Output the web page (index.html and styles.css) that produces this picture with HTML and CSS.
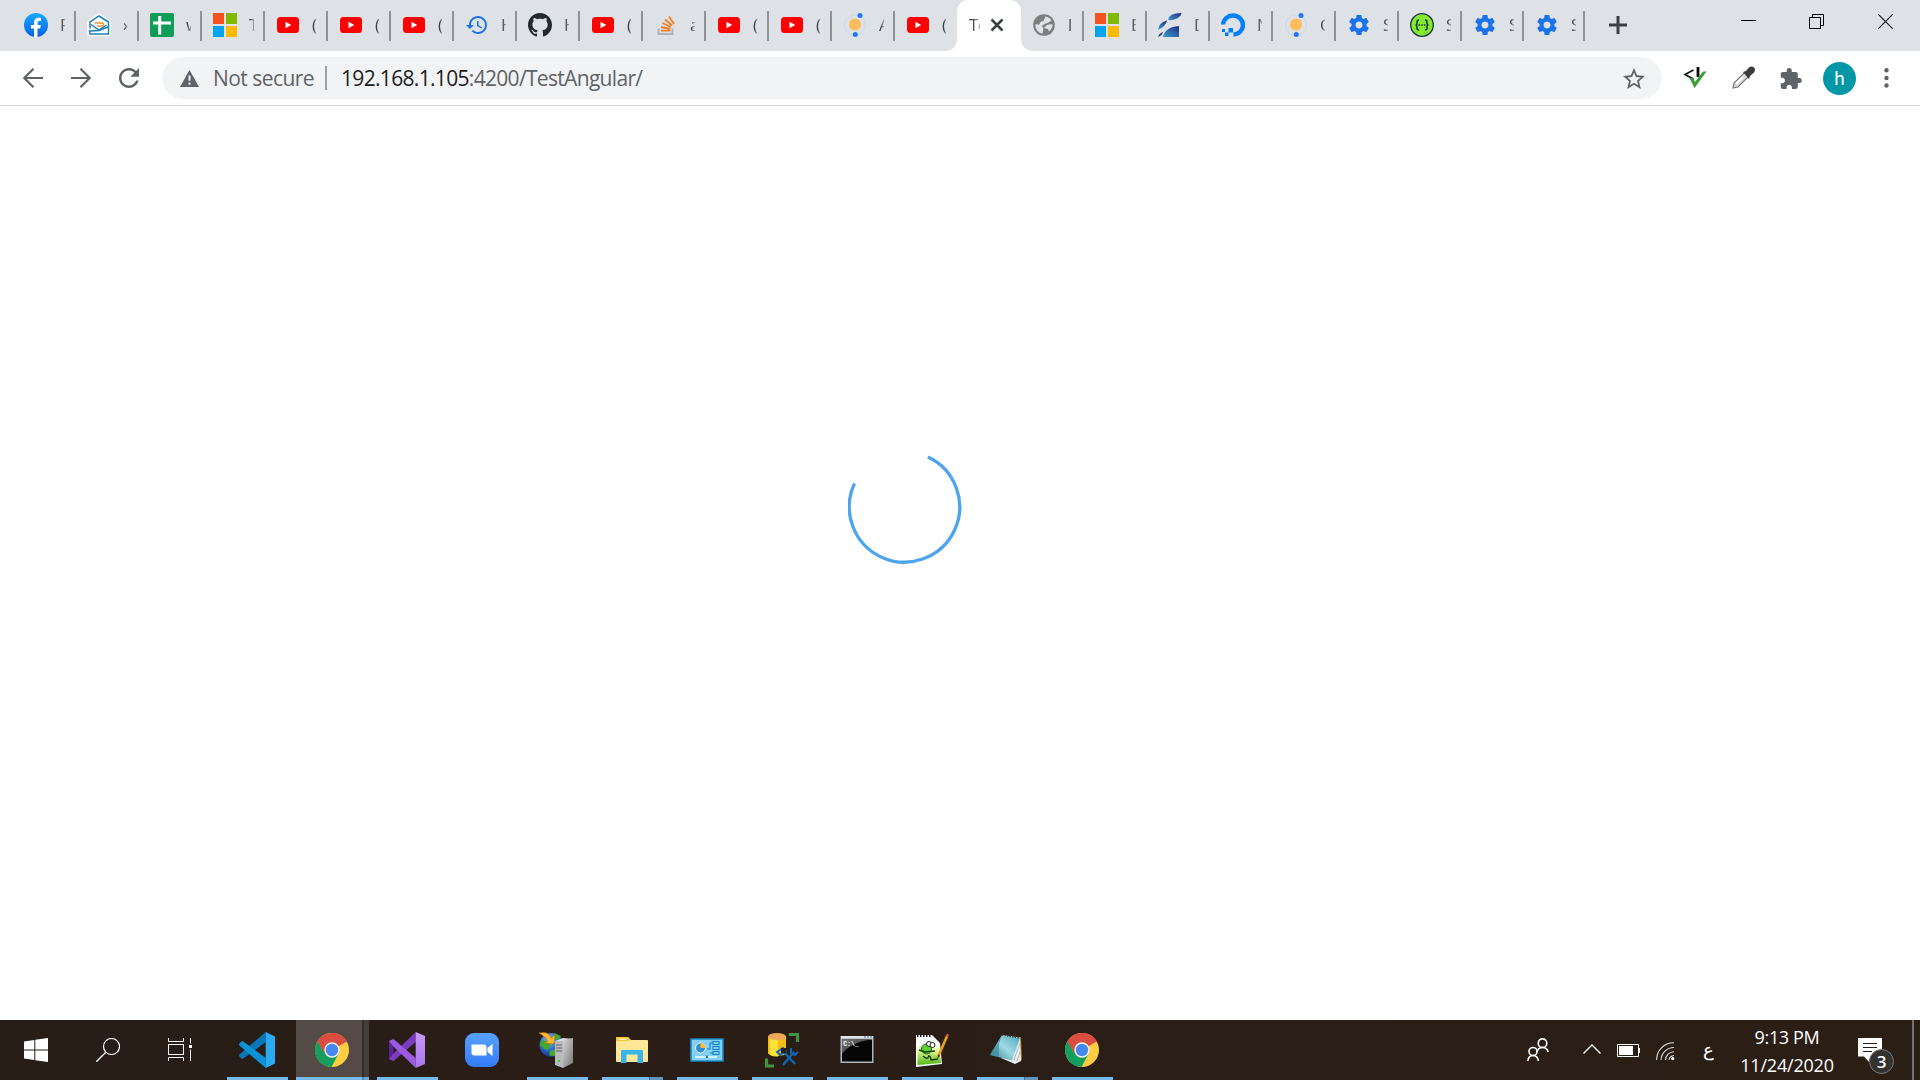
FILE: index.html
```html
<!DOCTYPE html>
<html lang="en">
<head>
<meta charset="utf-8">
<title>TestAngular</title>
<link rel="stylesheet" href="styles.css">
</head>
<body>
<svg class="defs" width="0" height="0">
  <defs>
    <linearGradient id="fbg" x1="0" y1="0" x2="0" y2="1"><stop offset="0" stop-color="#19aaff"/><stop offset="1" stop-color="#0560e8"/></linearGradient>
    <linearGradient id="leaf" x1="1" y1="0" x2="0" y2="1"><stop offset="0" stop-color="#1d2c85"/><stop offset="1" stop-color="#3e9ccc"/></linearGradient>
    <linearGradient id="zoomg" x1="0" y1="0" x2="0" y2="1"><stop offset="0" stop-color="#57a2ff"/><stop offset="1" stop-color="#367bf8"/></linearGradient>
    <linearGradient id="srv" x1="0" y1="0" x2="1" y2="1"><stop offset="0" stop-color="#d5d5d5"/><stop offset="1" stop-color="#777"/></linearGradient>
    <linearGradient id="note" x1="0" y1="1" x2="1" y2="0"><stop offset="0" stop-color="#2c7d93"/><stop offset=".5" stop-color="#9edbe6"/><stop offset="1" stop-color="#4ba4b8"/></linearGradient>
    <linearGradient id="npp" x1="0" y1="0" x2="0" y2="1"><stop offset="0" stop-color="#fff"/><stop offset=".35" stop-color="#dff58b"/><stop offset="1" stop-color="#4fb512"/></linearGradient>
    <radialGradient id="globe" cx=".4" cy=".3" r=".75"><stop offset="0" stop-color="#8fc5f5"/><stop offset=".5" stop-color="#2e6fd0"/><stop offset="1" stop-color="#152a80"/></radialGradient>
    <linearGradient id="vsr" x1="0" y1="0" x2="0" y2="1"><stop offset="0" stop-color="#c79af8"/><stop offset="1" stop-color="#a974ef"/></linearGradient>
    <linearGradient id="cmd" x1="0" y1="0" x2="1" y2="1"><stop offset="0" stop-color="#777"/><stop offset="1" stop-color="#222"/></linearGradient>
  </defs>
  <symbol id="facebook" viewBox="0 0 24 24"><circle cx="12" cy="12" r="12" fill="url(#fbg)"/><path d="M10 24v-8.400H7v-3.500h3V9.500c0-3 1.800-4.700 4.600-4.700 1.200 0 2.300.2 2.300.2v3h-1.500c-1.500 0-1.900.9-1.900 1.900v2.200h3.300l-.6 3.500h-2.700V24z" fill="#fff"/></symbol>
  <symbol id="mail" viewBox="0 0 24 24"><path d="M12 2 2 9v12.500h20V9z" fill="#fff" stroke="#fff" stroke-width="3.500" stroke-linejoin="round"/><path d="M3 15.500V9L12 3l9.500 6v12H3l-.5-3 9.500-.5 9-3.500" fill="none" stroke="#1b7fb9" stroke-width="1.500"/><path d="m4 11.500 8 5.500 7.500-5" fill="none" stroke="#1b7fb9" stroke-width="1.500"/><path d="M7.500 10h8q2 1 0 3H10" fill="none" stroke="#f39b32" stroke-width="1.600"/></symbol>
  <symbol id="sheet" viewBox="0 0 24 24"><rect width="24" height="24" rx="2" fill="#0f9d58"/><path d="M9.700 3v18.500M3 10h18" stroke="#fff" stroke-width="3"/></symbol>
  <symbol id="ms" viewBox="0 0 24 24"><path d="M0 0h11v11H0z" fill="#f4511e"/><path d="M13 0h11v11H13z" fill="#7fba00"/><path d="M0 13h11v11H0z" fill="#00a4ef"/><path d="M13 13h11v11H13z" fill="#ffb900"/></symbol>
  <symbol id="yt" viewBox="0 0 24 24"><rect x="1" y="4" width="22" height="16" rx="3.500" fill="red"/><path d="M9.500 8.800v6.400l5.800-3.200z" fill="#fff"/></symbol>
  <symbol id="history" viewBox="0 0 24 24"><path d="M13 3c-4.970 0-9 4.030-9 9H1l3.890 3.890.07.14L9 12H6c0-3.870 3.130-7 7-7s7 3.130 7 7-3.130 7-7 7c-1.930 0-3.680-.79-4.940-2.060l-1.420 1.420C8.270 19.990 10.510 21 13 21c4.970 0 9-4.030 9-9s-4.030-9-9-9zm-1 5v5l4.280 2.540.72-1.210-3.500-2.080V8H12z" fill="#1a73e8"/></symbol>
  <symbol id="github" viewBox="0 0 16 16"><path fill="#24292e" d="M8 0C3.580 0 0 3.580 0 8c0 3.540 2.290 6.530 5.470 7.590.4.070.55-.17.55-.38 0-.19-.01-.82-.01-1.490-2.010.37-2.530-.49-2.690-.94-.09-.23-.48-.94-.82-1.130-.28-.15-.68-.52-.01-.53.63-.01 1.080.58 1.230.82.72 1.210 1.870.87 2.330.66.07-.52.28-.87.51-1.070-1.780-.2-3.640-.89-3.640-3.950 0-.87.31-1.590.82-2.150-.08-.2-.36-1.020.08-2.120 0 0 .67-.21 2.200.82.64-.18 1.320-.27 2-.27s1.360.09 2 .27c1.530-1.040 2.200-.82 2.200-.82.44 1.100.16 1.920.08 2.120.51.56.82 1.270.82 2.150 0 3.070-1.870 3.750-3.650 3.950.29.25.54.73.54 1.480 0 1.070-.01 1.930-.01 2.200 0 .21.15.46.55.38A8.010 8.010 0 0 0 16 8c0-4.420-3.580-8-8-8z"/></symbol>
  <symbol id="so" viewBox="0 0 24 24"><path d="M4.500 15.500V21h14v-5.500" fill="none" stroke="#b0b4b8" stroke-width="2"/><path d="M7 17.700h9.500M7 14l9.300 2M8.300 10l8.600 4M11 6.500l7.200 6M15 3.500l5 7.500" stroke="#f48024" stroke-width="1.800"/></symbol>
  <symbol id="atom" viewBox="0 0 24 24"><circle cx="12" cy="12" r="10.500" fill="none" stroke="#cbd9e8" stroke-width="1"/><circle cx="12" cy="11.500" r="6" fill="#ffbd59"/><circle cx="17" cy="2.500" r="2.500" fill="#2176ff"/><circle cx="12.300" cy="21.500" r="2.500" fill="#2176ff"/></symbol>
  <symbol id="world" viewBox="0 0 24 24"><circle cx="12" cy="12" r="10.800" fill="#7d7f80"/><path d="m3.500 11 5 1 3 3-1 5.500C6 20 3 16 3.500 11zM13.500 3.500q4 .5 6 4l-3 2-4 1.500-2.500 2-3-1 1.500-3 3-1zM20.500 11q0 5-3.500 7.500l-1-2.500-4-1 3-3z" fill="#dee1e6"/></symbol>
  <symbol id="leaf2" viewBox="0 0 24 24"><path d="M10 7Q11 0 23.500 0C23 4 17 8 10 7z" fill="url(#leaf)"/><path d="M0 17Q1 9 9 7.500Q8 13 0 17z" fill="url(#leaf)"/><path d="M5 24Q7 14 21 13V24z" fill="url(#leaf)"/><path d="M0 24q1-4 5-5-1 4-5 5z" fill="#27459b"/></symbol>
  <symbol id="ocean" viewBox="0 0 24 24"><path d="M2 11.500a10 9.500 0 1 1 10.500 10" fill="none" stroke="#0080ff" stroke-width="4.400"/><path d="M7.500 15h4.500v4.500H7.500zM4 19.500h3.500V23H4zM1 16h3v3H1z" fill="#0080ff"/></symbol>
  <symbol id="gear" viewBox="0 0 24 24"><path fill="#1a73e8" d="M19.430 12.980c.04-.32.070-.64.070-.98s-.03-.66-.07-.98l2.110-1.650c.19-.15.24-.42.12-.64l-2-3.460c-.12-.22-.39-.3-.61-.22l-2.490 1c-.52-.4-1.080-.73-1.690-.98l-.38-2.650C14.460 2.180 14.250 2 14 2h-4c-.25 0-.46.18-.49.420l-.38 2.650c-.61.25-1.170.59-1.690.98l-2.490-1c-.23-.09-.49 0-.61.22l-2 3.460c-.13.22-.07.49.12.64l2.110 1.650c-.04.32-.07.65-.07.98s.03.66.07.98l-2.110 1.650c-.19.15-.24.42-.12.64l2 3.460c.12.22.39.3.61.22l2.490-1c.52.4 1.080.73 1.690.98l.38 2.650c.03.24.24.42.49.42h4c.25 0 .46-.18.49-.42l.38-2.650c.61-.25 1.170-.59 1.690-.98l2.490 1c.23.09.49 0 .61-.22l2-3.460c.12-.22.07-.49-.12-.64l-2.110-1.650zM12 15.500c-1.930 0-3.500-1.570-3.500-3.500s1.570-3.500 3.500-3.500 3.500 1.570 3.500 3.500-1.570 3.500-3.500 3.500z"/></symbol>
  <symbol id="swagger" viewBox="0 0 24 24"><circle cx="12" cy="12" r="11.300" fill="#85ea2d" stroke="#173647" stroke-width="1.300"/><path d="M9 7q-2 0-2 2v1.500Q7 12 5.500 12 7 12 7 13.500V15q0 2 2 2M15 7q2 0 2 2v1.500q0 1.500 1.500 1.500-1.500 0-1.500 1.500V15q0 2-2 2" fill="none" stroke="#173647" stroke-width="1.500"/><path d="M8.500 12h7" stroke="#173647" stroke-width="1.500" stroke-dasharray="1.600 1.100"/></symbol>
  <symbol id="chrome" viewBox="0 0 34 34"><circle cx="17" cy="17" r="17" fill="#ffcd40"/><path d="M17 17 2.300 8.500A17 17 0 0 1 31.700 8.500z" fill="#db4d41"/><path d="M17 0A17 17 0 0 1 32.200 9.300H17z" fill="#db4d41"/><path d="M2.300 8.500A17 17 0 0 0 16.500 34L23.500 21 17 17 10.300 20.800z" fill="#159e5c"/><path d="M2.300 8.500 9 20 17 17V9.300z" fill="#db4d41"/><path d="M2.300 8.500 9.800 21 17 24.500 12 33.200A17 17 0 0 1 2.300 8.500z" fill="#159e5c"/><circle cx="17" cy="17" r="7.700" fill="#f3f3f3"/><circle cx="17" cy="17" r="6.200" fill="#4688f1"/></symbol>
</svg>

<header class="tabstrip">
  <nav class="tabs">
    <div class="tab"><svg class="fav"><use href="#facebook"/></svg><span class="tt">F</span></div>
    <div class="tab"><svg class="fav"><use href="#mail"/></svg><span class="tt">›</span></div>
    <div class="tab"><svg class="fav"><use href="#sheet"/></svg><span class="tt">w</span></div>
    <div class="tab"><svg class="fav"><use href="#ms"/></svg><span class="tt">T</span></div>
    <div class="tab"><svg class="fav"><use href="#yt"/></svg><span class="tt">(</span></div>
    <div class="tab"><svg class="fav"><use href="#yt"/></svg><span class="tt">(</span></div>
    <div class="tab"><svg class="fav"><use href="#yt"/></svg><span class="tt">(</span></div>
    <div class="tab"><svg class="fav"><use href="#history"/></svg><span class="tt">H</span></div>
    <div class="tab"><svg class="fav"><use href="#github"/></svg><span class="tt">H</span></div>
    <div class="tab"><svg class="fav"><use href="#yt"/></svg><span class="tt">(</span></div>
    <div class="tab"><svg class="fav"><use href="#so"/></svg><span class="tt">a</span></div>
    <div class="tab"><svg class="fav"><use href="#yt"/></svg><span class="tt">(</span></div>
    <div class="tab"><svg class="fav"><use href="#yt"/></svg><span class="tt">(</span></div>
    <div class="tab"><svg class="fav"><use href="#atom"/></svg><span class="tt">A</span></div>
    <div class="tab last"><svg class="fav"><use href="#yt"/></svg><span class="tt">(</span></div>
    <div class="tab active"><span class="tt">Te</span><svg class="x" viewBox="0 0 14 14"><path d="m1.500 1.500 11 11m0-11-11 11" stroke="#3c4043" stroke-width="2.500"/></svg></div>
    <div class="tab"><svg class="fav"><use href="#world"/></svg><span class="tt">l</span></div>
    <div class="tab"><svg class="fav"><use href="#ms"/></svg><span class="tt">E</span></div>
    <div class="tab"><svg class="fav"><use href="#leaf2"/></svg><span class="tt">D</span></div>
    <div class="tab"><svg class="fav"><use href="#ocean"/></svg><span class="tt">N</span></div>
    <div class="tab"><svg class="fav"><use href="#atom"/></svg><span class="tt">C</span></div>
    <div class="tab"><svg class="fav"><use href="#gear"/></svg><span class="tt">S</span></div>
    <div class="tab"><svg class="fav"><use href="#swagger"/></svg><span class="tt">S</span></div>
    <div class="tab slim"><svg class="fav"><use href="#gear"/></svg><span class="tt">S</span></div>
    <div class="tab slimmer"><svg class="fav"><use href="#gear"/></svg><span class="tt">S</span></div>
  </nav>
  <svg class="plus" viewBox="0 0 18 18"><path d="M9 0v18M0 9h18" stroke="#3c4043" stroke-width="3"/></svg>
  <div class="winctl">
    <svg viewBox="0 0 15 15"><path d="M0 6.500h15" stroke="#000"/></svg>
    <svg viewBox="0 0 15 15"><path d="M.5 3.500h11v11H.5zM3.500 3.500v-3h11v11h-3" fill="none" stroke="#000"/></svg>
    <svg viewBox="0 0 15 15"><path d="m.3.3 14.400 14.400m0-14.400L.3 14.700" stroke="#111" stroke-width="1.100"/></svg>
  </div>
</header>

<div class="toolbar">
  <div class="nav">
    <svg viewBox="0 0 20 20"><path d="M20 10H2M10.500.8 1.300 10l9.200 9.200" fill="none" stroke="#5f6368" stroke-width="2.200"/></svg>
    <svg viewBox="0 0 20 20"><path d="M0 10h18M9.500.8l9.200 9.200-9.200 9.200" fill="none" stroke="#5f6368" stroke-width="2.200"/></svg>
    <svg viewBox="4 4 16 16"><path fill="#5f6368" d="M17.650 6.350C16.200 4.900 14.210 4 12 4c-4.420 0-7.990 3.580-7.990 8s3.570 8 7.990 8c3.730 0 6.840-2.550 7.730-6h-2.080c-.82 2.330-3.040 4-5.650 4-3.310 0-6-2.690-6-6s2.690-6 6-6c1.660 0 3.140.69 4.220 1.780L13 11h7V4l-2.350 2.350z"/></svg>
  </div>
  <div class="omnibox">
    <svg class="warn" viewBox="0 0 19 17"><path d="M9.500 0 19 17H0z" fill="#5f6368"/><path d="M9.500 5.500v5.300M9.500 12.500v2.200" stroke="#f1f3f4" stroke-width="2"/></svg>
    <span class="secure">Not secure</span>
    <span class="bar"></span>
    <span class="url"><b>192.168.1.105</b>:4200/TestAngular/</span>
    <svg class="star" viewBox="2 2 20 19"><path fill="#5f6368" d="M22 9.240l-7.190-.62L12 2 9.190 8.630 2 9.240l5.460 4.730L5.820 21 12 17.270 18.180 21l-1.630-7.030L22 9.240zM12 15.400l-3.760 2.270 1-4.280-3.320-2.880 4.380-.38L12 6.100l1.710 4.040 4.380.38-3.320 2.880 1 4.280L12 15.400z"/></svg>
  </div>
  <div class="ext">
    <svg class="e1" viewBox="0 0 24 24"><path d="M10.500 4 2 8.500l8.500 4.500" fill="none" stroke="#111" stroke-width="1.600"/><path d="M15 1v10" stroke="#000" stroke-width="2.800"/><path d="m6.500 12 5 10L23.500 5.500h-3.500L12 16l-1.700-4z" fill="#3b9b3b"/></svg>
    <svg class="e2" viewBox="0 0 24 24"><path d="m2 22 1-5L14 6l4 4L7 21z" fill="#d9d9d9" stroke="#777" stroke-width="1.200"/><path d="m5 18 7-7" stroke="#fff" stroke-width="2"/><path d="m12 6 3-1 3-3.500q3-2 5 0t0 5L19 10l-1 3z" fill="#3a3a3a"/></svg>
    <svg class="e3" viewBox="1.500 1 21.500 21"><path fill="#5f6368" d="M20.500 11H19V7c0-1.100-.9-2-2-2h-4V3.500a2.500 2.500 0 0 0-5 0V5H4c-1.100 0-1.990.9-1.990 2v3.800H3.500c1.490 0 2.700 1.210 2.700 2.700s-1.210 2.700-2.700 2.700H2V20c0 1.100.9 2 2 2h3.800v-1.500c0-1.490 1.210-2.700 2.700-2.700s2.700 1.210 2.700 2.700V22H17c1.100 0 2-.9 2-2v-4h1.500a2.500 2.500 0 0 0 0-5z"/></svg>
    <span class="avatar">h</span>
    <svg class="dots" viewBox="0 0 5 20"><circle cx="2.500" cy="2.300" r="2.200"/><circle cx="2.500" cy="10" r="2.200"/><circle cx="2.500" cy="17.500" r="2.200"/></svg>
  </div>
</div>

<main class="page">
  <svg class="spinner" viewBox="0 0 114 114"><path d="M79.900 6.900A55.200 55.200 0 1 1 6.500 33.500" fill="none" stroke="#4fa5ed" stroke-width="3.300"/></svg>
</main>

<footer class="taskbar">
  <div class="sys"><svg width="24" height="24" viewBox="0 0 24 24"><path d="M0 3.500 10.300 2v9.500H0zM11.300 1.800 24 0v11.500H11.300zM0 12.500h10.300V22L0 20.500zM11.300 12.500H24V24l-12.700-1.800z" fill="#fff"/></svg></div>
  <div class="sys"><svg width="24" height="24" viewBox="0 0 24 24"><circle cx="15.500" cy="8.500" r="8" fill="none" stroke="#fff" stroke-width="1.200"/><path d="M9.800 14.300.4 23.700" stroke="#fff" stroke-width="1.400"/></svg></div>
  <div class="sys wide"><svg width="25" height="24" viewBox="0 0 25 24"><path d="M.5 6.500h15v10H.5zM.5 0v3.500h15V0M.5 23v-3.500h15V23M22.500 0v5.500M22.500 11.500V23" fill="none" stroke="#fff"/><path d="M21 7h3v3h-3z" fill="#fff"/></svg></div>

  <div class="app run"><svg viewBox="0 0 36 36"><path d="m26.700 0v10L4.200 26.600Q3.200 27.200 2.500 26.500L.4 24.500q-.8-1 0-2z" fill="#0877b9"/><path d="M26.700 36V26L4.200 9.400Q3.200 8.800 2.500 9.500L.4 11.500q-.8 1 0 2z" fill="#0b91d8"/><path d="m26.700 0 9.300 4.500v27L26.700 36z" fill="#29aaf2"/></svg></div>
  <div class="app run current"><svg class="s34"><use href="#chrome"/></svg></div>
  <div class="app run"><svg viewBox="0 0 36 36"><path d="m0 9 4.500-2v22L0 27z" fill="#59249a"/><path d="M26.700 0v10L4.500 29 0 27l5-6z" fill="#7b3bc0"/><path d="M26.700 36V26L4.500 7 0 9l4 5z" fill="#9a5be0"/><path d="m26.700 0 9.300 4v28l-9.300 4z" fill="url(#vsr)"/></svg></div>
  <div class="app"><svg class="s34" viewBox="0 0 34 34"><rect width="34" height="34" rx="9" fill="url(#zoomg)"/><path d="M6.500 11.500h12q3 0 3 3v8h-12q-3 0-3-3zM22.500 15l5-4v12l-5-4z" fill="#fff"/></svg></div>
  <div class="app run"><svg viewBox="0 0 36 36"><circle cx="12.500" cy="13" r="12" fill="url(#globe)"/><path d="m3 8 5 1 4 4-3 5-4-1-4-4zM15 1l7 3-3 4-4-1zM11 19l6-2 2 6q-5 2-9 0z" fill="#42a82c"/><path d="M0 1q10-2 12 5l4-3-1 9-9-1 3-2q-2-4-9-8z" fill="#ffb72b" stroke="#b96c09" stroke-width=".6"/><path d="m16 9 8-3 10 1-8 3z" fill="#ddd"/><path d="M16 9h8v27l-8-3z" fill="#b9babb"/><path d="m24 8 10-2v25l-10 5z" fill="url(#srv)"/><path d="M17 13h6M17 16h6M17 19h6" stroke="#666" stroke-width="1"/><path d="M19 28h2v2h-2z" fill="#3d3"/></svg></div>
  <div class="app run multi"><svg viewBox="0 0 36 36"><path d="M2 6q0-1 1-1h11l3 3h16q1 0 1 1v20q0 1-1 1H3q-1 0-1-1z" fill="#ffe797"/><path d="M2 6q0-1 1-1h11l2 3-2 1H2z" fill="#f8c334"/><path d="M4.500 7.200h8" stroke="#fff" stroke-width="1"/><path d="M7 19q0-1 1-1h20q1 0 1 1v12h-5.500v-8.500h-11V31H7z" fill="#38b5e6"/></svg></div>
  <div class="app run"><svg viewBox="0 0 36 36"><path d="M2 7h32v22H2z" fill="#82d1f5" stroke="#1788c1" stroke-width="1.600"/><circle cx="11.500" cy="16" r="5" fill="#2e8fd2" stroke="#e8f8ff"/><path d="M11.500 16v-5a5 5 0 0 1 5 5z" fill="#ffb72f"/><path d="M24 9.500h6v3h-6zM24 14.500h6v3h-6zM24 19.500h6v3h-6zM18 17h3v-6h3m-3 10h3" fill="none" stroke="#167ec0" stroke-width="1.100"/><path d="M6 25h22" stroke="#e8fbff" stroke-width="1.600"/><path d="M17 23.500h2v2.500h-2z" fill="#147ab8"/></svg></div>
  <div class="app run"><svg viewBox="0 0 36 36"><path d="M4 4v17c0 4 18 4 18 0V4z" fill="#f4bd16"/><path d="M6 6v17q4 2 8 1.500V6z" fill="#ffe237"/><ellipse cx="13" cy="4.500" rx="9" ry="3.500" fill="#eda75b"/><path d="M25 2.500h8.500V10M2.500 26.500V34H10" fill="none" stroke="#41923f" stroke-width="3.200"/><path d="m17 17 14 15" stroke="#0d67b5" stroke-width="2.200"/><path d="M19 33 30 20" stroke="#0d67b5" stroke-width="2.200"/><path d="m13 20 6-4 3 3-6 4zM27 16v5l4 2 3-3" fill="none" stroke="#0d67b5" stroke-width="2"/><path d="M17 16h5v5h-5z" fill="#222"/></svg></div>
  <div class="app run"><svg viewBox="0 0 36 36"><path d="M1.500 4h33v27h-33z" fill="#aeb5bb"/><path d="M2 4h32v2.300H2z" fill="#e1e5ea"/><path d="M3 7.500h30v22H3z" fill="#060606"/><path d="M3 7.500h30Q12 10 3 22z" fill="url(#cmd)"/><text x="4.200" y="14" class="cmdtxt">C:\_</text><path d="M25 5h2m1 0h2m1 0h2" stroke="#456a9b"/></svg></div>
  <div class="app run"><svg viewBox="0 0 36 36"><path d="M2 3h16l8 8 2 21-26 3z" fill="#fafafa"/><path d="M3.500 12h22l1.500 19-23.500 2z" fill="url(#npp)"/><path d="M3 4h15" stroke="#222" stroke-width="2" stroke-dasharray="1.500 1.500"/><circle cx="12.500" cy="17" r="5" fill="#5bd22d" stroke="#226b18"/><circle cx="15" cy="12" r="2.500" fill="#fff" stroke="#222"/><circle cx="18.500" cy="13" r="2.500" fill="#fff" stroke="#222"/><path d="m5 18 6 2 10-1M9 24q5 5 6-1M16 24l1 4 7-1" fill="none" stroke="#173f19" stroke-width="1.400"/><path d="M33.500 3 24 25" stroke="#e8a01b" stroke-width="2.600"/><path d="m33 1.500 2 1-1 2.500-2-1z" fill="#cc4444"/><path d="m24.500 22-1.500 5 3-3z" fill="#552c12"/></svg></div>
  <div class="app run multi"><svg viewBox="0 0 36 36"><path d="m29 6 3-1 1 23-6 3z" fill="#b17b22"/><path d="m13 3 18 2.500 1 23.500-6 3-14-6z" fill="#e9eff1"/><path d="m13 3 18 3-8 22.500L1 23z" fill="url(#note)"/><path d="m13 3-12 20 9 2V12z" fill="#338799" opacity=".6"/><path d="m13 2.500 18 3" stroke="#333" stroke-width="2.400" stroke-dasharray="1.300 1.300"/><path d="M31 11 25 28m6-8-3 9" stroke="#a7b5b9" stroke-width=".9"/></svg></div>
  <div class="app run"><svg class="s34"><use href="#chrome"/></svg></div>

  <div class="tray">
    <svg class="people" viewBox="0 0 22 24"><g fill="none" stroke="#fff" stroke-width="1.600"><circle cx="15.500" cy="5.200" r="4.300"/><path d="M10 14q1-4.500 5.500-4.500T21.200 14"/><circle cx="6" cy="13.500" r="4"/><path d="M.8 23q.7-5.500 5.200-5.500T11.500 23"/></g></svg>
    <svg class="chev" viewBox="0 0 18 10"><path d="m.5 9.500 8.500-8.500 8.500 8.500" fill="none" stroke="#fff" stroke-width="1.300"/></svg>
    <svg class="batt" viewBox="0 0 23 13"><path d="M.5.5h21v12H.5z" fill="none" stroke="#fff"/><path d="M2 2h14v9H2zM22 4h1v5h-1z" fill="#fff"/></svg>
    <svg class="wifi" viewBox="0 0 19 19"><g fill="none" stroke="#ddd" stroke-width="1.100"><path d="M.6 18A17 17 0 0 1 18 .8M5 18A13 13 0 0 1 18 5.500M9.500 18A8.500 8.500 0 0 1 18 9.800M13 18q.5-4 5-4.500"/></g><circle cx="16.700" cy="16.600" r="1.700" fill="#fff"/></svg>
    <span class="lang">ع</span>
    <div class="clock"><span class="time">9:13 PM</span><span class="date">11/24/2020</span></div>
    <div class="notif">
      <svg viewBox="0 0 24 24"><path d="M0 0h24v18.500H12.500L11 24l-5-5.500H0z" fill="#fff"/><path d="M5 5.500h14M5 9.500h14M5 13.500h9" stroke="#2a1d16"/></svg>
      <span class="badge">3</span>
    </div>
    <div class="desk"></div>
  </div>
</footer>
</body>
</html>
```
FILE: styles.css
```css
* { box-sizing: border-box; }
body { margin: 0; width: 1920px; height: 1080px; overflow: hidden; display: flex; flex-direction: column; background: #fff; font-family: "Open Sans", "Noto Sans", sans-serif; color: #3c4043; }
svg { display: block; flex: none; }
.defs { position: absolute; }

.tabstrip { height: 51px; flex: none; display: flex; background: #dee1e6; padding-left: 13px; }
.tabs { display: flex; }
.tab { width: 63px; height: 51px; display: flex; align-items: center; padding: 0 0 1px 11px; background: linear-gradient(#8f9296, #8f9296) right 0 top 11px / 2px 30px no-repeat; }
.tab.slim { width: 62px; }
.tab.slimmer { width: 61px; }
.tab.last { background: none; }
.fav { width: 24px; height: 24px; }
.tt { margin-left: 12px; width: 5px; overflow: hidden; white-space: nowrap; font-size: 17px; line-height: 24px; -webkit-mask: linear-gradient(90deg, #000 30%, rgba(0, 0, 0, .35)); mask: linear-gradient(90deg, #000 30%, rgba(0, 0, 0, .35)); }
.tab.active { position: relative; background: #fff; border-radius: 11px 11px 0 0; margin-left: -1px; width: 64px; padding-left: 12px; }
.tab.active::before, .tab.active::after { content: ""; position: absolute; bottom: 0; width: 11px; height: 11px; }
.tab.active::before { left: -11px; background: radial-gradient(circle at 0 0, transparent 10.500px, #fff 11px); }
.tab.active::after { right: -11px; background: radial-gradient(circle at 100% 0, transparent 10.500px, #fff 11px); }
.tab.active .tt { margin: 0; width: 11px; letter-spacing: -.5px; }
.x { width: 14px; height: 14px; margin-left: 10px; }
.plus { width: 18px; height: 18px; margin: 16px 0 0 24px; }
.winctl { display: flex; gap: 53px; margin: 14px 27px 0 auto; }
.winctl svg { width: 15px; height: 15px; }
.winctl svg:last-child { margin-left: 1px; }

.toolbar { height: 55px; flex: none; display: flex; align-items: center; border-bottom: 1px solid #d8dadc; }
.nav { display: flex; gap: 28px; padding-left: 23px; width: 162px; }
.nav svg { width: 20px; height: 20px; }
.omnibox { width: 1500px; height: 42px; border-radius: 21px; background: #f1f3f4; display: flex; align-items: center; padding: 0 17px 0 18px; font-size: 21px; line-height: 41px; color: #5f6368; white-space: nowrap; }
.warn { width: 19px; height: 17px; }
.secure { width: 112px; margin-left: 14px; letter-spacing: -.55px; padding-top: 1px; }
.bar { width: 2px; height: 24px; background: #9aa0a6; }
.url { margin-left: 14px; letter-spacing: -.68px; padding-top: 1px; }
.url b { font-weight: 400; color: #202124; }
.star { width: 22px; height: 21px; margin-left: auto; }
.ext { flex: 1; display: flex; align-items: center; }
.e1, .e2 { width: 24px; height: 24px; }
.e1 { margin-left: 21px; }
.e2 { margin-left: 24px; }
.e3 { width: 22px; height: 21px; margin-left: 25px; }
.avatar { width: 33px; height: 33px; border-radius: 50%; background: #0097a7; color: #fff; font: 19px/33px Roboto, sans-serif; text-align: center; margin-left: 21px; }
.dots { width: 5px; height: 20px; margin-left: 28px; fill: #5f6368; }

.page { flex: 1; padding: 344px 0 0 848px; }
.spinner { width: 114px; height: 114px; }

.taskbar { height: 60px; flex: none; display: flex; background: linear-gradient(90deg, #281d17, #2a1d16 40%, #2b1e15); color: #fff; }
.sys { width: 72px; display: flex; align-items: center; justify-content: center; }
.sys.wide { width: 76px; padding-right: 3px; }
.app { width: 75px; display: flex; align-items: center; justify-content: center; padding-right: 2px; }
.app svg { width: 36px; height: 36px; }
.app svg.s34 { width: 34px; height: 34px; }
.run { background: linear-gradient(#76b9ed, #76b9ed) center bottom / 61px 3px no-repeat; }
.run.multi { background: linear-gradient(90deg, #76b9ed 47px, #426a8b 47px 48px, #5f94be 48px) center bottom / 61px 3px no-repeat; }
.run.current { width: 73px; margin: 0 1px; padding-right: 1px; background: linear-gradient(90deg, #76b9ed 66px, #5788ae 66px 68px, #6ca8d8 68px) left bottom / 73px 3px no-repeat, linear-gradient(90deg, #544b46 66px, #332c28 66px 68px, #443e3a 68px); }
.cmdtxt { font: bold 6.500px "Liberation Mono", monospace; fill: #fff; }

.tray { flex: 1; display: flex; align-items: center; padding-left: 407px; }
.people { width: 22px; height: 24px; }
.chev { width: 18px; height: 10px; margin-left: 34px; margin-top: -2px; }
.batt { width: 23px; height: 13px; margin-left: 16px; }
.wifi { width: 19px; height: 19px; margin-left: 16px; margin-top: 2px; }
.lang { width: 12px; margin-left: 28px; font: 18px/24px "DejaVu Sans", sans-serif; }
.clock { width: 112px; margin-left: 16px; display: flex; flex-direction: column; align-items: center; font-size: 18px; line-height: 28px; white-space: nowrap; padding-top: 1px; }
.time { letter-spacing: -.35px; }
.date { letter-spacing: -.2px; }
.notif { position: relative; width: 24px; height: 24px; margin-left: 15px; margin-top: -1px; }
.notif svg { width: 24px; height: 24px; }
.badge { position: absolute; left: 11px; top: 11px; width: 25px; height: 25px; border-radius: 50%; border: 1px solid #777; background: #333231; font: 600 17px/23px "Open Sans", sans-serif; text-align: center; }
.desk { width: 2px; height: 60px; margin-left: auto; margin-right: 6px; background: #75706d; }
```
